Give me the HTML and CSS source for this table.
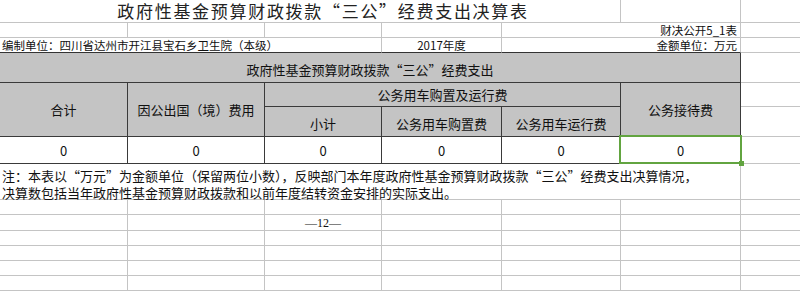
FILE: index.html
```html
<!DOCTYPE html>
<html lang="zh-CN">
<head>
<meta charset="utf-8">
<title>政府性基金预算财政拨款三公经费支出决算表</title>
<link rel="stylesheet" href="styles.css">
</head>
<body>
<div class="sheet">
  <div class="c s5c t title">政府性基金预算财政拨款“三公”经费支出决算表</div>
  <div class="c"></div>
  <div class="c end"></div>

  <div class="c"></div>
  <div class="c"></div>
  <div class="c"></div>
  <div class="c"></div>
  <div class="c s2c t small right">财决公开5_1表</div>
  <div class="c end"></div>

  <div class="c s3c t small left dk-b">编制单位：四川省达州市开江县宝石乡卫生院（本级）</div>
  <div class="c t small center dk-b">2017年度</div>
  <div class="c s2c t small right dk-b">金额单位：万元</div>
  <div class="c end"></div>

  <div class="c s6c t hd center cap">政府性基金预算财政拨款“三公”经费支出</div>
  <div class="c end"></div>

  <div class="c s2r t hd center">合计</div>
  <div class="c s2r t hd center">因公出国（境）费用</div>
  <div class="c s3c t hd center">公务用车购置及运行费</div>
  <div class="c s2r t hd center">公务接待费</div>
  <div class="c end"></div>

  <div class="c t hd center low">小计</div>
  <div class="c t hd center low">公务用车购置费</div>
  <div class="c t hd center low">公务用车运行费</div>
  <div class="c end"></div>

  <div class="c t data center">0</div>
  <div class="c t data center">0</div>
  <div class="c t data center">0</div>
  <div class="c t data center">0</div>
  <div class="c t data center">0</div>
  <div class="c t data center sel">0</div>
  <div class="c end"></div>

  <div class="c s6c note"><p class="line">注：本表以“万元”为金额单位（保留两位小数），反映部门本年度政府性基金预算财政拨款“三公”经费支出决算情况，</p><p class="line">决算数包括当年政府性基金预算财政拨款和以前年度结转资金安排的实际支出。</p></div>
  <div class="c end"></div>

  <div class="c"></div><div class="c"></div><div class="c"></div><div class="c"></div><div class="c"></div><div class="c"></div><div class="c end"></div>
  <div class="c"></div><div class="c"></div><div class="c t center page">—12—</div><div class="c"></div><div class="c"></div><div class="c"></div><div class="c end"></div>
  <div class="c"></div><div class="c"></div><div class="c"></div><div class="c"></div><div class="c"></div><div class="c"></div><div class="c end"></div>
  <div class="c"></div><div class="c"></div><div class="c"></div><div class="c"></div><div class="c"></div><div class="c"></div><div class="c end"></div>
  <div class="c"></div><div class="c"></div><div class="c"></div><div class="c"></div><div class="c"></div><div class="c"></div><div class="c end"></div>
  <div class="c"></div><div class="c"></div><div class="c"></div><div class="c"></div><div class="c"></div><div class="c"></div><div class="c end"></div>
</div>
</body>
</html>
```

FILE: styles.css
```css
html, body {
  margin: 0;
  padding: 0;
  background: #ffffff;
}

body {
  font-family: "Noto Sans CJK SC", "Noto Sans", sans-serif;
  color: #111111;
}

.sheet {
  display: grid;
  width: 800px;
  grid-template-columns: 128px 137px 117px 120px 119px 120px 59px;
  grid-template-rows: 23px 15px 15px 30px 24px 30px 27px 36px 15px 16px 15px 15px 15px 15px;
}

.c {
  box-sizing: border-box;
  border-right: 1px solid #c4c4c4;
  border-bottom: 1px solid #c4c4c4;
}

.end {
  border-right: none;
}

.t {
  display: flex;
  align-items: center;
  white-space: nowrap;
  font-size: 13px;
  line-height: 15px;
}

.s2c { grid-column: span 2; }
.s3c { grid-column: span 3; }
.s5c { grid-column: span 5; }
.s6c { grid-column: span 6; }
.s2r { grid-row: span 2; }

.center { justify-content: center; }
.left { justify-content: flex-start; padding-left: 2px; }
.right { justify-content: flex-end; padding-right: 3px; }

.title {
  justify-content: center;
  padding-left: 26px;
  font-size: 17px;
  letter-spacing: 1.7px;
  line-height: 20px;
  color: #222222;
}

.small {
  font-size: 11.5px;
  line-height: 14px;
}

.dk-b {
  border-bottom-color: #333333;
}

.hd {
  background: #c4c4c4;
  border-right-color: #3a3a3a;
  border-bottom-color: #3a3a3a;
}

.cap {
  padding-top: 3px;
}

.low {
  padding-top: 3px;
}

.data {
  border-right-color: #3a3a3a;
  border-bottom-color: #3a3a3a;
  padding-top: 1px;
}

.sel {
  position: relative;
}

.sel::after {
  content: "";
  position: absolute;
  top: -2px;
  left: -2px;
  right: -2px;
  bottom: -1px;
  border: 2px solid #62a440;
  pointer-events: none;
}

.sel::before {
  content: "";
  position: absolute;
  right: -4px;
  bottom: -3px;
  width: 5px;
  height: 5px;
  background: #62a440;
  z-index: 2;
}

.note {
  padding-left: 2px;
  padding-top: 3px;
  white-space: nowrap;
}

.line {
  margin: 0;
  font-size: 13px;
  line-height: 17px;
  height: 17px;
}

.page {
  font-family: "Liberation Serif", "Noto Serif CJK SC", serif;
  font-size: 12px;
  padding-top: 2px;
}
```
